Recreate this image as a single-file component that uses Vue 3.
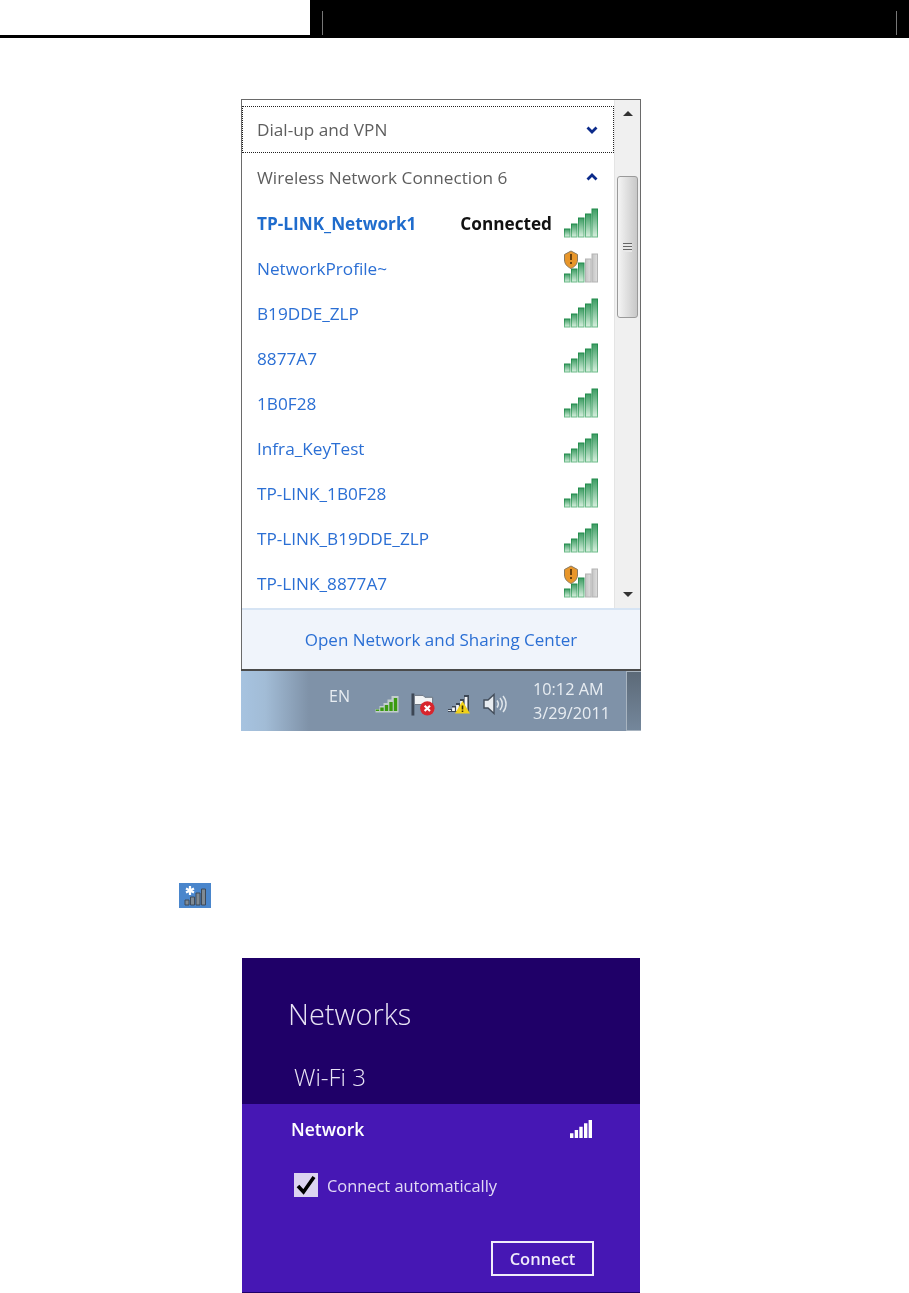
<template>
  <div class="page">
    <!-- page header -->
    <header class="doc-header">
      <div class="header-left"></div>
      <div class="header-right">
        <span class="header-tick"></span>
        <span class="header-tick"></span>
      </div>
    </header>

    <!-- Windows 7 network flyout -->
    <section class="win7">
      <div class="flyout">
        <div class="net-list">
          <div class="group-row focused">
            <span>Dial-up and VPN</span>
            <svg class="chevron" width="12" height="8" viewBox="0 0 12 8"><path d="M1.500 1.500 6 6l4.500-4.500" fill="none" stroke="#0b2a8a" stroke-width="2.800"/></svg>
          </div>
          <div class="group-row">
            <span>Wireless Network Connection 6</span>
            <svg class="chevron" width="12" height="8" viewBox="0 0 12 8"><path d="M1.500 6.500 6 2l4.500 4.500" fill="none" stroke="#0b2a8a" stroke-width="2.800"/></svg>
          </div>
          <div v-for="net in networks" :key="net.name" class="net-row">
            <span class="net-name" :class="{ active: net.connected }">{{ net.name }}</span>
            <span v-if="net.connected" class="net-status">Connected</span>
            <svg class="signal" width="34" height="31" viewBox="0 0 34 31">
              <rect
                v-for="(bar, i) in bars"
                :key="i"
                :x="bar.x"
                :y="bar.y"
                width="5.500"
                :height="bar.h"
                :fill="net.secured && i > 2 ? 'url(#barGray)' : 'url(#barGreen)'"
                :stroke="net.secured && i > 2 ? '#b4b4b4' : 'url(#barGreenEdge)'"
              />
              <g v-if="net.secured">
                <path d="M0.500 1.500 7 -2 13.500 1.500V7c0 4-3 7-6.500 8.500C3.500 14 0.500 11 0.500 7z" fill="#e8962a" stroke="#8a7a60"/>
                <path d="M7 1v6M7 9v2" stroke="#4a2c08" stroke-width="1.600"/>
              </g>
            </svg>
          </div>
        </div>
        <div class="scrollbar">
          <span class="arrow up"></span>
          <div class="thumb"><span class="grip"></span></div>
          <span class="arrow down"></span>
        </div>
      </div>
      <div class="flyout-footer">Open Network and Sharing Center</div>
      <div class="taskbar">
        <span class="lang">EN</span>
        <div class="tray">
          <svg width="24" height="18" viewBox="0 0 24 18">
            <path d="M0.500 17.500V14h4v-3h4V8h4V4.500h4V1h7v16.500z" fill="#dfe8dc" opacity="0.700"/>
            <path d="M2.500 16v-1.500M7 16v-3.500M11.500 16v-6M16 16V7M20.500 16V3" stroke="#3a9a10" stroke-width="3.400" fill="none"/>
          </svg>
          <svg width="24" height="25" viewBox="0 0 25 25">
            <path d="M2 1v23" stroke="#3c4654" stroke-width="3"/>
            <path d="M3.500 3h9l2 2h8v9h-8l-2-1.500h-9z" fill="#f2f4f6" stroke="#6a7380"/>
            <circle cx="17" cy="16.500" r="7.500" fill="#d8242c"/>
            <path d="M14.200 13.700l5.600 5.600M19.800 13.700l-5.600 5.600" stroke="#fff" stroke-width="2.200"/>
          </svg>
          <svg width="24" height="20" viewBox="0 0 24 20">
            <path d="M1 18v-3h4v-3h4V9h4V5h4V1h5v17z" fill="#3c4654"/>
            <path d="M2.500 17v-1M6.500 17v-3.500M10.500 17v-6M14.500 17V7M19 17V3" stroke="#f2f4f6" stroke-width="2.800"/>
            <path d="M15.500 7 23 19.500H8z" fill="#f2d21a"/>
            <path d="M15.500 11.500v4M15.500 16.500v1.600" stroke="#3a3000" stroke-width="1.600"/>
          </svg>
          <svg width="24" height="22" viewBox="0 0 24 22">
            <path d="M1 7h4l6-5.500v19L5 15H1z" fill="#e8ecf0" stroke="#434d5a" stroke-width="1.400"/>
            <path d="M14 7.500c1.500 2 1.500 5 0 7M17 5c3 3.500 3 8.500 0 12M20 3c4 4.500 4 11.500 0 16" fill="none" stroke="#dfe5ea" stroke-width="1.500"/>
          </svg>
        </div>
        <div class="clock">
          <span>10:12 AM</span>
          <span>3/29/2011</span>
        </div>
        <div class="show-desktop"></div>
      </div>
    </section>

    <!-- inline wireless icon -->
    <div class="inline-icon">
      <svg width="32" height="25" viewBox="0 0 32 25">
        <rect width="32" height="25" fill="#4a86cc"/>
        <path d="M6 22v-5h4v5zM11.500 22v-8h4v8zM17 22V10h4v12zM22.500 22V6h4v16z" fill="#7f8a94" stroke="#3f4a58"/>
        <path d="M11 3v9M7 5.500l8 4M15 5.500l-8 4" stroke="#fff" stroke-width="2.200"/>
      </svg>
    </div>

    <!-- Windows 8 network charm -->
    <section class="win8">
      <div class="win8-top">
        <h2 class="charm-title">Networks</h2>
        <div class="charm-sub">Wi-Fi 3</div>
      </div>
      <div class="win8-card">
        <div class="card-head">
          <span class="card-name">Network</span>
          <svg width="22" height="18" viewBox="0 0 22 18">
            <path d="M0 18v-4.700h3.400V18zM4.700 18v-8h3.400v8zM9.300 18V6.700h3.400V18zM14 18V3.300h3.400V18zM18.600 18V0H22v18z" fill="#fff"/>
          </svg>
        </div>
        <label class="auto-row">
          <span class="check">
            <svg width="24" height="24" viewBox="0 0 24 24"><path d="M4 13l5.500 6L20 4" fill="none" stroke="#000" stroke-width="3.600"/></svg>
          </span>
          <span>Connect automatically</span>
        </label>
        <div class="btn-row">
          <button class="connect-btn">Connect</button>
        </div>
      </div>
    </section>

    <!-- shared gradients -->
    <svg class="defs" width="0" height="0">
      <defs>
        <linearGradient id="barGreen" x1="0" x2="0" y1="0" y2="1">
          <stop offset="0" stop-color="#3d9c63"/>
          <stop offset="1" stop-color="#d8f0df"/>
        </linearGradient>
        <linearGradient id="barGreenEdge" x1="0" x2="0" y1="0" y2="1">
          <stop offset="0" stop-color="#1f8a4a"/>
          <stop offset="1" stop-color="#6dbb8a"/>
        </linearGradient>
        <linearGradient id="barGray" x1="0" x2="1" y1="0" y2="0">
          <stop offset="0" stop-color="#c4c4c4"/>
          <stop offset="1" stop-color="#dedede"/>
        </linearGradient>
      </defs>
    </svg>
  </div>
</template>

<script setup>
const networks = [
  { name: 'TP-LINK_Network1', connected: true },
  { name: 'NetworkProfile~', secured: true },
  { name: 'B19DDE_ZLP' },
  { name: '8877A7' },
  { name: '1B0F28' },
  { name: 'Infra_KeyTest' },
  { name: 'TP-LINK_1B0F28' },
  { name: 'TP-LINK_B19DDE_ZLP' },
  { name: 'TP-LINK_8877A7', secured: true }
]

const bars = [
  { x: 0.500, y: 21, h: 8 },
  { x: 7.500, y: 16, h: 13 },
  { x: 14.500, y: 10, h: 19 },
  { x: 21.500, y: 6, h: 23 },
  { x: 28, y: 1, h: 28 }
]
</script>

<style>
html, body {
  margin: 0;
  background: #fff;
}
</style>

<style scoped>
.page {
  position: relative;
  width: 909px;
  height: 1293px;
  overflow: hidden;
  background: #fff;
  font-family: "Open Sans", "Noto Sans", "Liberation Sans", sans-serif;
}

/* header */
.doc-header {
  display: flex;
  height: 38px;
}

.header-left {
  width: 310px;
  border-bottom: 3px solid #000;
  box-sizing: border-box;
}

.header-right {
  flex: 1;
  background: #000;
  display: flex;
  justify-content: space-between;
  padding: 11px 12px 3px 12px;
}

.header-tick {
  width: 1px;
  background: #777;
}

/* win7 flyout */
.win7 {
  width: 400px;
  margin: 61px 0 0 241px;
  box-sizing: border-box;
  border: 1px solid #6a6a6a;
  border-bottom: none;
  filter: blur(0.35px);
}

.flyout {
  display: flex;
  height: 508px;
  background: #fff;
}

.net-list {
  flex: 1;
  padding-top: 6px;
  min-width: 0;
}

.group-row {
  display: flex;
  align-items: center;
  justify-content: space-between;
  height: 48px;
  box-sizing: border-box;
  padding: 0 15px;
  color: #5e5e5e;
  font-size: 17.200px;
}

.group-row.focused {
  border: 1px dotted #222;
  padding: 0 14px;
  height: 47px;
}

.chevron {
  margin-right: 1px;
}

.net-row {
  display: flex;
  align-items: center;
  height: 45px;
  padding: 0 16px 0 15px;
}

.signal {
  overflow: visible;
}

.net-name {
  flex: 1;
  color: #2b6fd4;
  font-size: 17.200px;
}

.net-name.active {
  font-weight: 700;
  color: #1f6ccd;
}

.net-status {
  margin-right: 12px;
  font-size: 17.200px;
  font-weight: 700;
  color: #111;
}

.scrollbar {
  position: relative;
  width: 26px;
  background: #f0f0f0;
  border-left: 1px solid #e4e4e4;
  box-sizing: border-box;
}

.arrow {
  position: absolute;
  left: 8px;
  width: 0;
  height: 0;
  border-left: 5px solid transparent;
  border-right: 5px solid transparent;
}

.arrow.up {
  top: 11px;
  border-bottom: 5px solid #333;
}

.arrow.down {
  bottom: 11px;
  border-top: 5px solid #333;
}

.thumb {
  position: absolute;
  top: 76px;
  left: 2px;
  width: 21px;
  height: 142px;
  box-sizing: border-box;
  border: 1px solid #9a9a9a;
  border-radius: 3px;
  background: linear-gradient(90deg, #f4f4f4, #dcdcdc 55%, #c8c8c8);
  display: flex;
  align-items: center;
  justify-content: center;
}

.grip {
  width: 9px;
  height: 9px;
  background: repeating-linear-gradient(180deg, #666 0 1px, #e8e8e8 1px 3px);
}

.flyout-footer {
  height: 61px;
  box-sizing: border-box;
  border-top: 2px solid #d6e4f4;
  background: #f0f4fb;
  display: flex;
  align-items: center;
  justify-content: center;
  color: #2b6fd4;
  font-size: 17px;
}

.taskbar {
  position: relative;
  display: flex;
  height: 62px;
  margin: 0 -1px;
  border-top: 2px solid #4a4a4a;
  box-sizing: border-box;
  background: linear-gradient(90deg, #a6c3e0 0, #a2bcd6 6%, #7f92a8 17%, #7f92a8 100%);
  color: #e8edf2;
}

.lang {
  margin: 14px 0 0 88px;
  font-size: 16px;
}

.tray {
  display: flex;
  align-items: center;
  gap: 12px;
  margin: 6px 0 0 25px;
  height: 54px;
}

.clock {
  display: flex;
  flex-direction: column;
  margin: 6px 0 0 26px;
  font-size: 16.300px;
  line-height: 24px;
  white-space: nowrap;
}

.show-desktop {
  position: absolute;
  top: 0;
  right: 0;
  bottom: 0;
  width: 15px;
  box-sizing: border-box;
  border: 1px solid #a8b4c0;
  border-right: none;
  background: linear-gradient(180deg, #5c6a78, #74879b);
}

/* small icon */
.inline-icon {
  height: 25px;
  margin: 152px 0 0 179px;
}

.inline-icon svg {
  display: block;
}

/* win8 charm */
.win8 {
  width: 398px;
  height: 335px;
  margin: 50px 0 0 242px;
  display: flex;
  flex-direction: column;
  filter: blur(0.35px);
}

.win8-top {
  height: 146px;
  box-sizing: border-box;
  background: #1f0068;
  color: #e9e4f5;
  padding: 35px 0 0 46px;
}

.charm-title {
  margin: 0;
  font-size: 29px;
  font-weight: 300;
  line-height: 42px;
}

.charm-sub {
  margin: 27px 0 0 6px;
  font-size: 24px;
  font-weight: 300;
  line-height: 30px;
}

.win8-card {
  flex: 1;
  background: #4617b4;
  border-bottom: 1px solid #1f0068;
  color: #fff;
  padding: 15px 46px 0 49px;
}

.card-head {
  display: flex;
  align-items: center;
  justify-content: space-between;
  height: 20px;
  margin-right: 2px;
}

.card-name {
  font-size: 17.500px;
  font-weight: 600;
}

.auto-row {
  display: flex;
  align-items: center;
  gap: 9px;
  margin: 34px 0 0 3px;
  font-size: 16.400px;
  color: #e2daf5;
}

.check {
  width: 24px;
  height: 24px;
  background: #dcd4f0;
  display: flex;
}

.btn-row {
  display: flex;
  justify-content: flex-end;
  margin-top: 44px;
}

.connect-btn {
  width: 103px;
  height: 35px;
  box-sizing: border-box;
  background: transparent;
  border: 2px solid #f0ecfa;
  color: #efeafa;
  font-family: inherit;
  font-size: 16.500px;
  font-weight: 600;
  padding: 0;
}

.defs {
  position: absolute;
}
</style>
